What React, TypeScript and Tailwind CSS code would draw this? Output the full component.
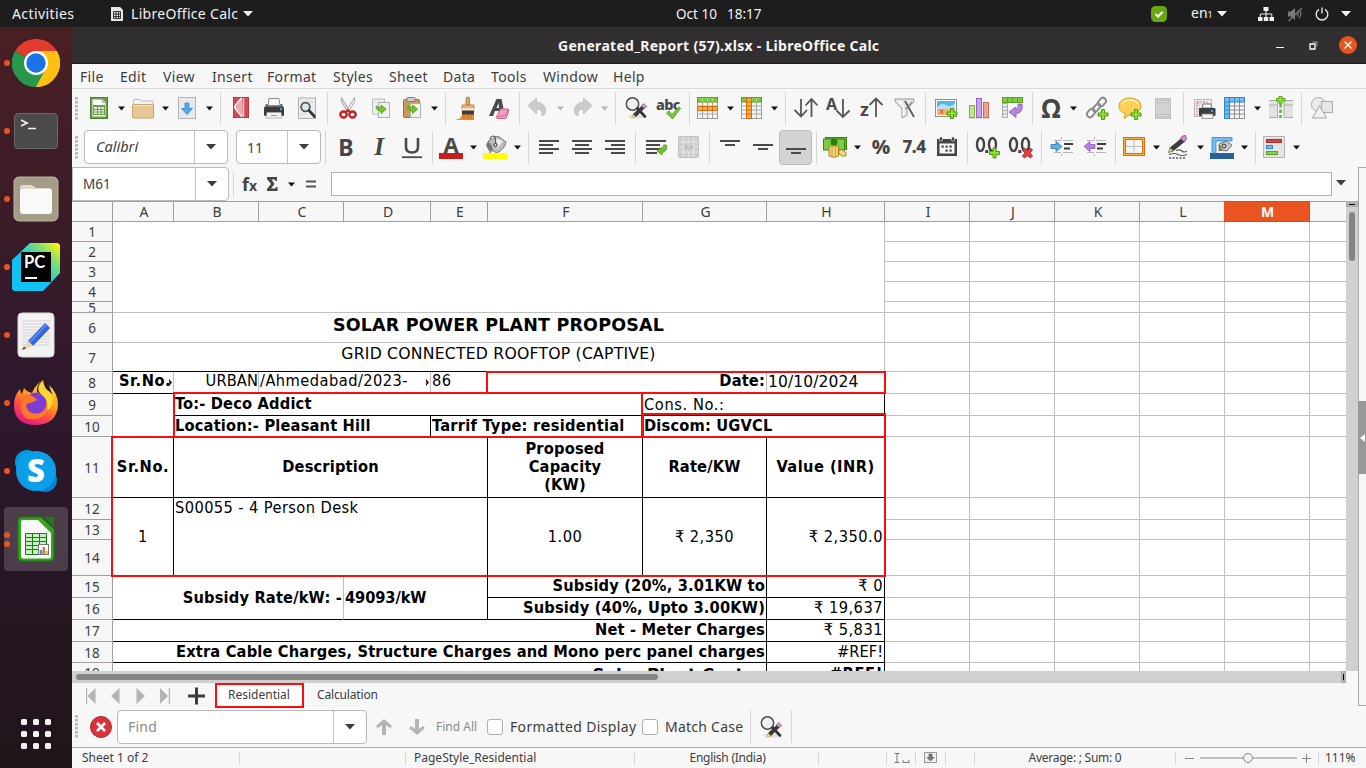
import React from "react";

type P = { children?: React.ReactNode; className?: string };

const Svg = ({ children, w = 24, h = 24, className = "" }: P & { w?: number; h?: number }) => (
  <svg width={w} height={h} viewBox={`0 0 ${w} ${h}`} fill="none" className={`shrink-0 ${className}`}>
    {children}
  </svg>
);

const Caret = ({ fill = "#111" }: { fill?: string }) => (
  <svg width="7" height="5" viewBox="0 0 7 5" className="shrink-0">
    <path d="M0 .5h7L3.5 4.5z" fill={fill} />
  </svg>
);
const BigCaret = ({ fill = "#3d3d3d" }: { fill?: string }) => (
  <svg width="10" height="6" viewBox="0 0 10 6" className="shrink-0">
    <path d="M0 0h10L5 5.5z" fill={fill} />
  </svg>
);

/* ---------- toolbar pieces ---------- */
const Btn = ({ children }: P) => <div className="flex w-[33px] shrink-0 justify-center pl-px">{children}</div>;
const Split = ({ children, off = false }: P & { off?: boolean }) => (
  <div className="flex w-11 shrink-0 items-center gap-[7px] pl-[3px]">
    {children}
    <Caret fill={off ? "#b5b5b5" : "#111"} />
  </div>
);
const Sep = () => <div className="mr-[3px] ml-1 h-[33px] w-px shrink-0 bg-[#d6d6d6]" />;
const Grip = () => (
  <svg width="3" height="23" viewBox="0 0 3 23" className="shrink-0">
    {[0, 4, 8, 12, 16, 20].map((y) => (
      <rect key={y} y={y} width="3" height="2.6" fill="#b9b9b9" />
    ))}
  </svg>
);

/* ---------- shared fragments ---------- */
const Plus = ({ x, y }: { x: number; y: number }) => (
  <path
    d={`M${x + 3.5} ${y + 0.5}h3v3.5h3.5v3h-3.5v3.5h-3v-3.5H${x}v-3h3.5z`}
    fill="#8ae234"
    stroke="#4e9a06"
    strokeWidth="1"
  />
);
const GreenArrow = ({ x, y }: { x: number; y: number }) => (
  <path
    d={`M${x} ${y}q0 5 5 5v2.5l5-4.3l-5-4.2v2.5q-3 0-5-1.5z`}
    fill="#73c234"
    stroke="#4e9a06"
    strokeWidth=".8"
  />
);

const NewDoc = () => (
  <Svg>
    <rect x="3.5" y="1.5" width="17" height="21" fill="#6b9e48" stroke="#4f7f30" />
    <path d="M5.500 3.500h10l3 3v14h-13z" fill="#fff" />
    <path d="M15.500 3.500v3h3" fill="#cde3bb" stroke="#6b9e48" strokeWidth=".6" />
    <rect x="6.500" y="9.500" width="11" height="9" fill="#e7f2df" stroke="#6b9e48" />
    <path d="M6.500 10.500h11M6.500 13.500h11M6.500 16h11M10.500 9.500v9M14 9.500v9" stroke="#6b9e48" />
  </Svg>
);
const OpenDoc = () => (
  <Svg>
    <path d="M2.500 10V5l1-1.500h6L10.500 5h11l.5 1.500V10z" fill="#f3f3f3" stroke="#bcbcbc" />
    <rect x="1.500" y="8.500" width="21" height="13.500" rx="1" fill="#e6c795" stroke="#c9a46c" />
    <path d="M2.500 9.500h19" stroke="#f6e5c7" />
  </Svg>
);
const SaveDoc = () => (
  <Svg>
    <rect x="3.500" y="1.500" width="17" height="21" fill="#e9e9e9" stroke="#b4b4b4" />
    <path d="M10 7h4v5.500h3.500L12 18.500L6.500 12.500H10z" fill="#55a9e0" stroke="#2f86c4" strokeWidth=".8" />
  </Svg>
);
const Pdf = () => (
  <Svg>
    <rect x="4.500" y="1.500" width="15" height="20" fill="#cf4a52" stroke="#b53a42" />
    <path d="M13 2L6.500 9q-1.500 2 0 4L14 20.500z" fill="#eba9ab" />
    <path d="M12.500 2L6.500 9q-1.500 2 0 4L13 21" stroke="#fff" strokeWidth="1.300" />
    <path d="M14.500 2v19" stroke="#f3c3c3" strokeWidth="1.500" />
  </Svg>
);
const Printer = () => (
  <Svg>
    <path d="M4 8h16l2 4H2z" fill="#6b6b6b" />
    <rect x="2" y="11" width="20" height="9" rx="1.500" fill="#3b3b3b" />
    <path d="M6 9.500l1-7h10l1 7z" fill="#fafafa" stroke="#8a8a8a" />
    <rect x="18" y="12" width="2" height="2" fill="#29b6f6" />
    <path d="M5 16.500h14l1 5.500H4z" fill="#f4f4f4" stroke="#aaa" strokeWidth=".8" />
    <path d="M9 19.500h6" stroke="#999" />
  </Svg>
);
const Preview = () => (
  <Svg>
    <rect x="3.500" y="2" width="17" height="20.500" fill="#ececec" stroke="#b0b0b0" />
    <path d="M5.500 6h13M5.500 18h6" stroke="#d5d5d5" />
    <circle cx="10.500" cy="11" r="4.300" fill="#dfe5ea" stroke="#555" strokeWidth="1.800" />
    <path d="M14 14.500l5.500 6" stroke="#333" strokeWidth="2.600" strokeLinecap="round" />
  </Svg>
);
const Cut = () => (
  <Svg>
    <path d="M5.500 1.500q-1 4 2 8l4 6 1.600-2z" fill="#d9d9d9" stroke="#8b8b8b" strokeWidth=".7" />
    <path d="M18.500 1.500q1 4-2 8l-4 6-1.600-2z" fill="#efefef" stroke="#8b8b8b" strokeWidth=".7" />
    <ellipse cx="7.500" cy="18.500" rx="3.200" ry="3" stroke="#c41f1f" strokeWidth="2.300" />
    <ellipse cx="16.500" cy="18.500" rx="3.200" ry="3" stroke="#c41f1f" strokeWidth="2.300" />
    <path d="M10 16l2-2 2 2" stroke="#c41f1f" strokeWidth="1.800" />
  </Svg>
);
const Copy = () => (
  <Svg>
    <rect x="3.500" y="3" width="12" height="15" fill="#ededed" stroke="#bdbdbd" />
    <rect x="9.500" y="6.500" width="11" height="15" fill="#f1f1f1" stroke="#b2b2b2" />
    <GreenArrow x={7} y={10} />
  </Svg>
);
const Paste = () => (
  <Svg>
    <rect x="3.500" y="3.500" width="16" height="18" rx="1" fill="#c79a5b" stroke="#9c7136" />
    <rect x="7" y="1.500" width="8" height="4" rx="1" fill="#cfcfcf" stroke="#7d7d7d" />
    <rect x="10.500" y="7.500" width="10" height="14" fill="#f3f3f3" stroke="#b2b2b2" />
    <GreenArrow x={7.5} y={10} />
  </Svg>
);
const Brush = () => (
  <Svg className="translate-x-px">
    <path d="M11 9V3q0-2 1.800-2t1.800 2v6z" fill="#dfa85c" stroke="#a8722c" strokeWidth=".8" />
    <path d="M7 9h12v5H7z" fill="#e9b870" stroke="#b07a34" strokeWidth=".8" />
    <path d="M7 12.500h12v2.200H7z" fill="#f4f4f4" />
    <path d="M7 14.500h12v4.500H7z" fill="#3e3e3e" />
    <path d="M7 18.500h12V24H0l5-1.500z" fill="#ee8a2a" />
    <path d="M9 19v4M13 19v4M16 19v4" stroke="#b86412" strokeWidth=".8" />
  </Svg>
);
const ClearFmt = () => (
  <Svg>
    <path d="M2 20L9.500 3h5l2.500 12-3 3h-2l-.4-3H8l-2 5zM9.500 12h2.600L11.500 7z" fill="#4a4a4a" />
    <path d="M13.500 13h7.500l1 1-2.500 7.500-1.500 1H10l-.5-1.500z" fill="#f79ac0" stroke="#d0628f" />
    <path d="M9.800 20h8.700l2.500-7" stroke="#d0628f" strokeWidth=".8" />
  </Svg>
);
const Undo = ({ flip = false }: { flip?: boolean }) => (
  <Svg className={flip ? "-scale-x-100" : ""}>
    <path d="M2 9.500L10.500 2v4.500q9 0 9 8.500 0 4-3.500 5 1.500-7-5.500-7v5z" fill="#cbcbcb" stroke="#bdbdbd" strokeWidth=".8" />
  </Svg>
);
const FindRep = () => (
  <Svg>
    <ellipse cx="13" cy="20.500" rx="9" ry="2" fill="#e0e0e0" />
    <circle cx="8.500" cy="8" r="6.200" fill="#eef0f1" stroke="#4d4d4d" strokeWidth="1.500" />
    <path d="M13.500 12.500l7.500 8" stroke="#333" strokeWidth="2.600" strokeLinecap="round" />
    <path d="M7.500 22.500l1.500-4.500L17.500 10l3 2.500L12 21z" fill="#3a3a3a" />
    <path d="M7.500 22.500l1.500-4.500 3 3z" fill="#f0d874" />
    <path d="M17.500 9.500l2-2 3.500 3-2 2z" fill="#d68fc0" stroke="#8e5a80" strokeWidth=".6" />
  </Svg>
);
const Abc = () => (
  <div className="relative h-6 w-6">
    <span className="absolute -left-px top-[-2px] font-[Noto_Sans] text-[14.500px] leading-5 font-extrabold tracking-[-0.7px] text-[#474747]">
      abc
    </span>
    <Svg className="absolute top-0 left-0">
      <path d="M9.500 17l2.500-2 3 3.500L22 11l1.500 1.500L15.500 23z" fill="#7ac943" stroke="#4e9a06" strokeWidth=".8" />
    </Svg>
  </div>
);
const Table = ({ v = false }: { v?: boolean }) => (
  <Svg>
    <rect x="1.500" y="1.500" width="20" height="21" fill="#f6f6f6" stroke="#9a9a9a" />
    <path d="M1.500 10h20M1.500 14h20M1.500 18h20M6.500 6v16M11.500 6v16M16.500 6v16" stroke="#a9a9a9" />
    <rect x="1.500" y="1.500" width="20" height="4.500" fill="#7ecb3f" stroke="#5ba321" />
    <path d="M6.500 2v4M11.500 2v4M16.500 2v4" stroke="#a6de7a" />
    {v ? (
      <path d="M6.500 2h5v20.500h-5zM6.500 6h5M6.500 10h5M6.500 14h5M6.500 18h5" fill="#fbb03b" stroke="#d56a10" />
    ) : (
      <path d="M1.500 10.500h20v4h-20zM6.500 10.500v4M11.500 10.500v4M16.500 10.500v4" fill="#fbb03b" stroke="#d56a10" />
    )}
  </Svg>
);
const Sort = () => (
  <Svg>
    <path d="M7 3v17M0.500 14L7 20.500 13 14M17.500 21V3M11.500 9.500l6-6.500 6 6.500" stroke="#565656" strokeWidth="1.800" />
  </Svg>
);
const SortAz = () => (
  <div className="relative h-6 w-6">
    <span className="absolute -left-px top-px font-[Noto_Sans] text-[16px] leading-[15px] font-bold text-[#4a4a4a]">A</span>
    <Svg className="absolute top-0 left-0">
      <path d="M16 3v17.500M9.500 14.500L16 21l6.500-6.500" stroke="#565656" strokeWidth="1.800" />
    </Svg>
  </div>
);
const SortZa = () => (
  <div className="relative h-6 w-6">
    <span className="absolute left-0 top-[5px] font-[Noto_Sans] text-[18px] leading-[17px] font-bold text-[#4a4a4a]">z</span>
    <Svg className="absolute top-0 left-0">
      <path d="M16 21V3M9.500 9L16 2.500 22.500 9" stroke="#565656" strokeWidth="1.800" />
    </Svg>
  </div>
);
const Filter = () => (
  <Svg>
    <path d="M2 3h19l-.5 3-6.500 7v6l-5 3v-9L2.500 6z" fill="#e9e9e9" stroke="#999" />
    <path d="M10.500 13V20M6 5l5 6" stroke="#fff" strokeWidth="1.500" />
    <path d="M12 5l9 16" stroke="#5a5a5a" strokeWidth="1.800" />
    <path d="M19 6L12.500 13" stroke="#8b8b8b" strokeWidth="1.200" />
  </Svg>
);
const Image = () => (
  <Svg>
    <rect x="1.500" y="3.500" width="21" height="17" fill="#fff" stroke="#8f8f8f" />
    <rect x="3" y="5" width="18" height="14" fill="#55b6ee" />
    <path d="M3 12q4-6 9-3t9-2v6H3z" fill="#b8e2f8" />
    <rect x="3" y="13" width="18" height="6" fill="#fbb45c" />
    <path d="M6 13.500l3 4M9 13.500l-3 4" stroke="#d33" />
    <Plus x={13} y={12} />
  </Svg>
);
const Chart = () => (
  <Svg>
    <path d="M1 22.500h22" stroke="#ddd" />
    <rect x="2.500" y="9.500" width="5" height="12" fill="#bde58c" stroke="#7cb342" />
    <rect x="9.500" y="2.500" width="5" height="19" fill="#c9a2ee" stroke="#9a62d0" />
    <rect x="16.500" y="6.500" width="5" height="15" fill="#f2a090" stroke="#d06a58" />
  </Svg>
);
const Pivot = () => (
  <Svg>
    <path d="M2.500 7.500h5v14h-5zM2.500 11h5M2.500 14.500h5M2.500 18h5" fill="#eee" stroke="#aaa" />
    <rect x="2.500" y="1.500" width="20" height="5" fill="#7ecb3f" stroke="#5ba321" />
    <path d="M7.500 2v4M12.500 2v4M17.500 2v4" stroke="#5ba321" />
    <path d="M18 8h4q1.500 9-6 9.500v4l-7-5.500 7-5v3q3-1 2-6z" fill="#b487e0" stroke="#8b58c0" strokeWidth=".8" />
  </Svg>
);
const Glyph = ({ children, className = "" }: P) => (
  <span className={`flex h-6 w-6 shrink-0 items-center justify-center leading-6 text-[#454545] ${className}`}>{children}</span>
);
const Link = () => (
  <Svg>
    <g stroke="#8b8b8b" strokeWidth="2">
      <rect x="-3" y="-4.500" width="6" height="9" rx="3" transform="translate(17 6) rotate(40)" />
      <rect x="-2" y="-4.500" width="4.500" height="9" rx="2.200" transform="translate(11.500 11.500) rotate(40)" />
      <rect x="-3" y="-4.500" width="6" height="9" rx="3" transform="translate(6 17) rotate(40)" />
    </g>
    <Plus x={13} y={13} />
  </Svg>
);
const Comment = () => (
  <Svg>
    <path d="M12 2c6.500 0 11 3.500 11 8s-4.500 8-10 8l-7 4.500 1.500-5C3.500 16.500 1 13.500 1 10c0-4.500 4.500-8 11-8z" fill="#fccf57" stroke="#dd9d1d" />
    <path d="M4 8q3-4 8-4t8 4" stroke="#fff0b8" strokeWidth="1.500" />
    <Plus x={13} y={13} />
  </Svg>
);
const HeadFoot = () => (
  <Svg>
    <rect x="4.500" y="2.500" width="15" height="20" fill="#d2d2d2" stroke="#bfbfbf" />
    <path d="M6.500 4.500h11v2h-11zM6.500 18.500h11v2h-11z" fill="#e2e2e2" stroke="#b5b5b5" strokeWidth=".8" />
  </Svg>
);
const PrintArea = () => (
  <Svg>
    <rect x="2.500" y="3.500" width="17" height="17" fill="#f1f1f1" stroke="#b9b9b9" />
    <path d="M2.500 8h17M2.500 13h17M7 4v16M12 4v16" stroke="#d0d0d0" />
    <path d="M5 6h12M5 6v14" stroke="#e05555" strokeDasharray="1.500 1.500" />
    <path d="M10 12l1-4h8l1 4z" fill="#fff" stroke="#777" />
    <rect x="7" y="12" width="16.500" height="8" rx="1" fill="#3d3d3d" />
    <rect x="19" y="14" width="2" height="2" fill="#29b6f6" />
    <rect x="10" y="18" width="11" height="4.500" fill="#f5f5f5" stroke="#888" strokeWidth=".8" />
  </Svg>
);
const Freeze = () => (
  <Svg>
    <rect x="1.500" y="1.500" width="20" height="21" fill="#f6f6f6" stroke="#999" />
    <path d="M6 10h16M6 14h16M6 18h16M11.500 6v16M16.500 6v16" stroke="#8d8d8d" />
    <path d="M1.500 1.500h20v4.500H6.500v16.500h-5z" fill="#74bdf0" stroke="#2f86c4" />
    <path d="M6.500 2v4M11.500 2v4M16.500 2v4M2 6h4M2 10h4M2 14h4M2 18h4" stroke="#2f86c4" />
  </Svg>
);
const SplitWin = () => (
  <Svg w={26}>
    <path d="M1 4.500h8.500v17H1zM16 4.500h9v17h-9z" fill="#e2e2e2" />
    <path d="M1 4.500h8.500v17H1M1 9h8.500M25 4.500h-9v17h9M25 9h-9" stroke="#ababab" />
    <path d="M12.500 8v14" stroke="#5cb52a" strokeWidth="2.500" strokeDasharray="3.500 2" />
    <path d="M11 0h3v2.500h3v2.500h-3v2.500h-3V5H8.500V2.500H11z" fill="#8ae234" stroke="#4e9a06" strokeWidth=".8" />
  </Svg>
);
const Shapes = () => (
  <Svg>
    <circle cx="8.500" cy="8.500" r="7" fill="#ececec" stroke="#adadad" />
    <rect x="11.500" y="5.500" width="11" height="11" fill="#e6e6e6" stroke="#adadad" />
    <path d="M9.500 9.500l7 12.500h-14z" fill="#f1f1f1" stroke="#a3a3a3" />
  </Svg>
);

const FontColor = () => (
  <div className="flex h-6 w-6 flex-col items-center justify-end">
    <span className="font-[Noto_Sans] text-[22px] leading-[18px] font-bold text-[#4a4a4a]">A</span>
    <span className="w-6 shrink-0 border-t-[6px] border-[#c91d1d]" />
  </div>
);
const Highlight = () => (
  <Svg className="overflow-visible">
    <path d="M5 6L15 1l8 6q-1 7-9 11L8 15z" fill="#bdbdbd" stroke="#666" strokeWidth=".8" />
    <path d="M12 3l8 3-6 8z" fill="#ececec" />
    <ellipse cx="6.500" cy="12" rx="2.500" ry="5" transform="rotate(-25 6.500 12)" fill="#777" />
    <path d="M7 4q1-4 5-2.500l1 8" stroke="#555" strokeWidth="1.100" />
    <circle cx="12.500" cy="10" r="1.600" stroke="#333" fill="#ddd" />
    <path d="M6 15l3 4H6z" fill="#e67e22" />
    <rect x="0" y="18" width="24" height="6" fill="#ff0" />
  </Svg>
);
const HAlign = ({ m }: { m: number }) => (
  <Svg>
    {[20, 14, 20, 14].map((w, i) => (
      <rect key={i} x={2 + ((20 - w) * m) / 2} y={5 + i * 4} width={w} height="2" fill="#4a4a4a" />
    ))}
  </Svg>
);
const VAlign = ({ y }: { y: number }) => (
  <Svg>
    <rect x="2" y={y} width="20" height="2" fill="#4a4a4a" />
    <rect x={7} y={y + 4} width="10" height="2" fill="#4a4a4a" />
  </Svg>
);
const Wrap = () => (
  <Svg>
    <path d="M2 6h20M2 10h14M2 14h16M2 18h11" stroke="#4a4a4a" strokeWidth="1.900" />
    <path d="M19.500 10h3q1 7-4.500 7.500v2.500l-5-4 5-4v2.500q2-.5 1.500-4.500z" fill="#73c234" stroke="#4e9a06" strokeWidth=".8" />
  </Svg>
);
const Merge = () => (
  <Svg>
    <rect x="1.500" y="1.500" width="20" height="21" rx="1" fill="#cfcfcf" stroke="#c0c0c0" />
    <path d="M1.500 7h20M1.500 17h20M6.500 2v20M11.500 2v5M11.500 17v5M16.500 2v20M2 12h4M17 12h4" stroke="#e6e6e6" />
    <path d="M10 9.500v5L7.500 12zM13.500 9.500v5L16 12z" fill="#b5b5b5" />
  </Svg>
);
const Money = () => (
  <Svg className="overflow-visible">
    <rect x="2.500" y="2.500" width="21" height="12" fill="#5cb52a" stroke="#3d8a12" />
    <rect x=".5" y="4" width="21" height="11" fill="#7ccb42" stroke="#3d8a12" />
    <circle cx="11" cy="7" r="3.500" fill="#2f7d12" />
    <path d="M6 11h9.500v10q-4.700 2.500-9.500 0z" fill="#f0d070" stroke="#a9862a" />
    <path d="M9 12v9M12.500 12v9" stroke="#c7a544" />
    <ellipse cx="19.500" cy="18" rx="4" ry="2.600" transform="rotate(35 19.500 18)" fill="#f5dc84" stroke="#a9862a" />
  </Svg>
);
const DateIc = () => (
  <Svg>
    <path d="M2 4h20v17H2zM4.500 8.500v10h15v-10z" fill="#454545" fillRule="evenodd" />
    <rect x="4.500" y="2" width="3" height="4" rx="1" fill="#454545" stroke="#f7f7f7" strokeWidth=".6" />
    <rect x="16.500" y="2" width="3" height="4" rx="1" fill="#454545" stroke="#f7f7f7" strokeWidth=".6" />
    {[7, 11, 15].map((x) => (
      <g key={x} fill="#454545">
        <rect x={x - 0.5} y="10.500" width="2.200" height="2.200" />
        {x > 7 && <rect x={x - 0.5} y="14.500" width="2.200" height="2.200" />}
      </g>
    ))}
  </Svg>
);
const Decimals = ({ del = false }: { del?: boolean }) => (
  <Svg className="overflow-visible">
    <ellipse cx="4.500" cy="9.500" rx="3.500" ry="6.500" stroke="#444" strokeWidth="2.400" />
    <ellipse cx="16.500" cy="9.500" rx="3.500" ry="6.500" stroke="#444" strokeWidth="2.400" />
    <rect x="9.300" y="15" width="3" height="3" fill="#444" />
    {del ? (
      <path d="M15.500 13l3 2.500 3-2.500 2 2-2.500 3 2.500 3-2 2-3-2.500-3 2.500-2-2 2.500-3-2.500-3z" fill="#e04040" stroke="#a81c1c" strokeWidth=".8" />
    ) : (
      <Plus x={13.5} y={12.5} />
    )}
  </Svg>
);
const Indent = ({ back = false }: { back?: boolean }) => (
  <Svg>
    <path d="M13 5.500h10M13 17.500h10M4 5.500h7M4 17.500h7M11.500 2v2.500M11.500 19v2" stroke="#b5b5b5" />
    <path d="M14 9h9M14 13.500h6" stroke="#3d3d3d" strokeWidth="2" />
    <path
      d={back ? "M12 9.500H7V6.500L1 11.500l6 5v-3h5z" : "M1 9.500h5V6.500l6 5-6 5v-3H1z"}
      fill={back ? "#b583e0" : "#58aee6"}
      stroke={back ? "#8b58c0" : "#2879b4"}
      strokeWidth=".8"
    />
  </Svg>
);
const Borders = () => (
  <Svg>
    <rect x="2.500" y="3.500" width="19" height="16" fill="#f6f6f6" stroke="#d5700f" strokeWidth="3" />
    <rect x="2.500" y="3.500" width="19" height="16" stroke="#fbb040" />
    <path d="M12 5v13M4 11.500h16" stroke="#bdbdbd" />
  </Svg>
);
const LineStyle = () => (
  <Svg className="overflow-visible">
    <path d="M4 12.500L15 3.500l3.500 3.500L7.500 16 2.500 17.500z" fill="#3d3d3d" />
    <path d="M2.500 17.500l1.500-5 3.500 3.500z" fill="#e6d26a" stroke="#555" strokeWidth=".5" />
    <path d="M14.500 3.500l2-2.500 3-.5 1 3-2 3.500z" fill="#d68fc0" stroke="#8e3f80" strokeWidth=".8" />
    <path d="M10 15.500q4-1.500 6 .5t5 0M3 19.500q5-2 9 0t9 0" stroke="#5a5a5a" strokeWidth="1.100" />
    <path d="M3 23h17" stroke="#555" strokeDasharray="2 1.500" strokeWidth="1.300" />
  </Svg>
);
const BorderColor = () => (
  <Svg className="overflow-visible">
    <path d="M2 20V2.500h20V6H6V20z" fill="#74bdf0" stroke="#2f86c4" strokeWidth=".8" />
    <path d="M9 9l7-3 6 4-5 6-6-1z" fill="#c9c9c9" stroke="#555" strokeWidth=".8" />
    <circle cx="14" cy="11" r="2" stroke="#333" />
    <path d="M9 10l3 5-3 1z" fill="#e67e22" stroke="#444" strokeWidth=".6" />
    <rect x="0" y="18" width="24" height="6" fill="#2a6099" />
  </Svg>
);
const Cond = () => (
  <Svg>
    <rect x="1.500" y="1.500" width="21" height="21" fill="#e4e4e4" stroke="#b5b5b5" />
    <rect x="4.500" y="4.500" width="15" height="3" fill="#d64545" stroke="#b22f2f" />
    <rect x="4.500" y="10.500" width="6" height="3" fill="#74bdf0" stroke="#2f86c4" />
    <rect x="4.500" y="16.500" width="11" height="3" fill="#8ad14c" stroke="#5ba321" />
  </Svg>
);

/* ---------- dock ---------- */
const Dot = () => <span className="h-[6px] w-[6px] shrink-0 rounded-full bg-[#e95420]" />;
const DockItem = ({ children, on = false }: P & { on?: boolean }) => (
  <div className="flex h-[68px] w-[72px] items-center">
    <div className="z-10 flex w-1 shrink-0 flex-col gap-[3px] pl-1">
      <Dot />
      {on && <Dot />}
    </div>
    <div className={`flex h-16 w-16 items-center justify-center rounded ${on ? "bg-white/17" : ""}`}>{children}</div>
  </div>
);

const Dock = () => (
  <nav className="flex w-[72px] shrink-0 flex-col bg-linear-to-b from-[#491f22] via-[#2e182d] via-50% to-[#20151b] pt-[2px]">
    <DockItem>
      <Svg w={48} h={48}>
        <path d="M24 24L3.200 12A24 24 0 0 1 44.800 12z" fill="#e33b2e" />
        <path d="M24 24L44.800 12A24 24 0 0 1 24 48z" fill="#fcc012" />
        <path d="M24 24V48A24 24 0 0 1 3.200 12z" fill="#27984b" />
        <path d="M3.200 12L14 30l10 5 10-5-10 18A24 24 0 0 1 3.200 12z" fill="#27984b" />
        <path d="M34 30L24 48h1A24 24 0 0 0 44.800 12H24z" fill="#fcc012" />
        <circle cx="24" cy="24" r="12" fill="#fff" />
        <circle cx="24" cy="24" r="9.700" fill="#1a73e8" />
      </Svg>
    </DockItem>
    <DockItem>
      <div className="h-9 w-11 rounded border border-[#6a6a6a] bg-[#4a4a4a]">
        <Svg w={42} h={34}>
          <path d="M6 6l6 3-6 3M13 14.500h8" stroke="#f2f2f2" strokeWidth="1.700" />
        </Svg>
      </div>
    </DockItem>
    <DockItem>
      <Svg w={46} h={46}>
        <rect x="1" y="1" width="44" height="44" rx="5" fill="#a39c86" stroke="#bbb59f" />
        <path d="M7 12q0-3 3-3h9l4 3h13q3 0 3 3v7H7z" fill="#dedacd" />
        <rect x="7" y="13" width="32" height="25" rx="3" fill="#f9f9f7" />
      </Svg>
    </DockItem>
    <DockItem>
      <Svg w={48} h={48}>
        <defs>
          <linearGradient id="pc" x1="0" y1="1" x2="1" y2="0">
            <stop offset=".45" stopColor="#10c3f2" />
            <stop offset=".75" stopColor="#7fe070" />
            <stop offset=".95" stopColor="#fcf010" />
          </linearGradient>
        </defs>
        <path d="M18 0h28l2 2v28L31 48H2l-2-2V17z" fill="url(#pc)" />
        <rect x="9" y="9" width="30" height="30" fill="#000" />
        <rect x="13" y="34" width="12" height="2" fill="#fff" />
        <text x="12" y="24.500" fontFamily="Lato, sans-serif" fontWeight="700" fontSize="16.500" fill="#fff">
          PC
        </text>
      </Svg>
    </DockItem>
    <DockItem>
      <Svg w={38} h={46}>
        <rect x="1" y="1" width="36" height="44" rx="4" fill="#f2f2f2" stroke="#d8d8d8" />
        <path d="M5 9h28M5 12h28M5 15h28M5 18h28M5 21h28M5 24h28M5 27h28M5 30h28M5 33h28" stroke="#d4d4d4" />
        <path d="M11 29L28 11l5 5-17 18z" fill="#3465d9" />
        <path d="M12.500 30.500L29.500 12.500" stroke="#5c88ee" strokeWidth="2" />
        <path d="M5 38l6-9 5 5z" fill="#f3d3a8" />
        <path d="M5 38l2-3.500 2 2z" fill="#444" />
      </Svg>
    </DockItem>
    <DockItem>
      <Svg w={46} h={48}>
        <defs>
          <linearGradient id="ff" x1="0.800" y1="0" x2=".3" y2="1">
            <stop offset="0" stopColor="#ffe83d" />
            <stop offset=".45" stopColor="#ff9a20" />
            <stop offset=".7" stopColor="#ff4b46" />
            <stop offset="1" stopColor="#e31587" />
          </linearGradient>
        </defs>
        <path
          d="M30 1q-7 5-6 12l6 3 9-1-3-9q9 8 9 20-1 19-22 20Q1 46 1 26q0-9 6-16 0 3 2 5l2-6q3 4 8 5 3-8 11-13z"
          fill="url(#ff)"
        />
        <circle cx="23" cy="24" r="10.500" fill="#7a3fd0" />
        <path d="M7 17q7-4 14 1l3 3q-3 2-7 3-4 0-4 4 2 7 10 7 9 0 12-8-1 12-13 13Q10 42 8 30q-1-7 3-11z" fill="#ff7a28" />
        <path d="M30 1q-9 9-1 15t5 16q10-9 3-19-6-3-7-12z" fill="#ffd72e" />
      </Svg>
    </DockItem>
    <DockItem>
      <Svg w={44} h={44}>
        <circle cx="13" cy="13" r="12" fill="#0098e0" />
        <circle cx="31" cy="31" r="12" fill="#0a80cf" />
        <circle cx="22" cy="22" r="20" fill="#0a9fe8" />
        <text x="13" y="33" fontFamily="'Open Sans', sans-serif" fontWeight="800" fontSize="31" fill="#fff">
          S
        </text>
      </Svg>
    </DockItem>
    <DockItem on>
      <Svg w={38} h={46}>
        <path d="M5 1h19l13 12v28q0 4-4 4H5q-4 0-4-4V5q0-4 4-4z" fill="#35a41f" stroke="#1b7a10" />
        <path d="M6 4h15l13 13v24q0 1.500-2 1.500H6q-2 0-2-2V6q0-2 2-2z" fill="#f8f8f8" />
        <path d="M27 1h10v10z" fill="#1b7f12" />
        <path d="M8.500 17.500h21v21h-21zM8.500 21.500h21M8.500 25.500h21M8.500 29.500h21M8.500 33.500h21M15.500 17.500v21M22.500 17.500v21" fill="#c9f0c0" stroke="#15800d" />
        <rect x="21.500" y="28.500" width="10" height="10" fill="#fff" stroke="#777" />
        <path d="M24 34v4" stroke="#2b9de0" strokeWidth="2.500" />
        <path d="M26.800 31v7" stroke="#e8762c" strokeWidth="2.500" />
        <path d="M29.700 35v3" stroke="#f2c12e" strokeWidth="2.500" />
      </Svg>
    </DockItem>
    <div className="mt-auto mb-[19px] grid grid-cols-3 gap-[6px] self-center">
      {Array.from({ length: 9 }, (_, i) => (
        <span key={i} className="h-[6px] w-[6px] rounded-[1.500px] bg-[#f5f3f2]" />
      ))}
    </div>
  </nav>
);

/* ---------- sheet ---------- */
const COLS = "ABCDEFGHIJKLM".split("");
const ROWS = Array.from({ length: 19 }, (_, i) => i + 1);

const Cell = ({ children, className = "" }: P) => (
  <div
    className={`flex min-w-0 overflow-hidden whitespace-nowrap ${
      className.includes("font-bold") ? "tracking-[0.17px]" : "tracking-[0.48px]"
    } ${className}`}
  >
    <span>{children}</span>
  </div>
);
const Overflow = () => (
  <svg width="3" height="7" viewBox="0 0 3 7" className="mt-[7px] shrink-0">
    <path d="M0 0l3 3.500L0 7z" fill="#000" />
    <path d="M0 2.500h1v2H0z" fill="#f33" />
  </svg>
);

const Sheet = () => (
  <div className="grid h-[470px] w-[1274px] shrink-0 grid-cols-[41px_61px_85px_85px_87px_57px_155px_124px_118px_85px_85px_85px_85px_85px_36px] grid-rows-[21px_20px_20px_20px_20px_11px_30px_29px_22px_22px_21px_61px_22px_20px_36px_22px_22px_22px_21px_8px] overflow-hidden bg-white font-['DejaVu_Sans_Condensed','DejaVu_Sans',sans-serif] text-[16.300px] leading-[18px] text-black">
    <div className="border-y border-r border-[#a0a0a0] bg-[#f7f7f7]" />
    {COLS.map((c) => (
      <div
        key={c}
        className={`flex items-center justify-center border-y border-r pl-[2px] font-[Noto_Sans] text-[14px] leading-4 ${
          c === "M"
            ? "-ml-px border-[#d84a18] bg-[#e95420] font-bold text-white"
            : "border-[#a0a0a0] bg-[#f7f7f7] text-[#3d3d3d]"
        }`}
      >
        {c}
      </div>
    ))}
    <div className="border-y border-[#a0a0a0] bg-[#f7f7f7]" />
    {ROWS.map((r) => (
      <div
        key={r}
        className={`col-start-1 flex justify-center overflow-hidden border-r border-[#a0a0a0] bg-[#f7f7f7] pt-px font-[Noto_Sans] text-[13.500px] leading-4 text-[#3d3d3d] ${
          r < 19 ? "items-center border-b" : "items-start"
        }`}
      >
        <span className={r === 19 ? "mt-px" : ""}>{r}</span>
      </div>
    ))}

    {/* free columns to the right of the report */}
    <div className="col-[10/16] row-[2/21] grid grid-cols-[85px_85px_85px_85px_85px_36px] grid-rows-[20px_20px_20px_20px_11px_30px_29px_22px_22px_21px_61px_22px_20px_36px_22px_22px_22px_21px_8px]">
      {ROWS.map((r) =>
        [0, 1, 2, 3, 4, 5].map((c) => (
          <div key={`${r}-${c}`} className={`${c < 5 ? "border-r" : ""} ${r < 19 ? "border-b" : ""} border-[#c0c0c0]`} />
        ))
      )}
    </div>

    <div className="col-[2/10] row-[2/7] border-r border-b border-[#c0c0c0]" />
    <Cell className="col-[2/10] row-[7/8] justify-center border-r border-b border-[#c0c0c0] pt-[3px] font-bold">
      <span className="font-['DejaVu_Sans',sans-serif] text-[17.500px]">SOLAR POWER PLANT PROPOSAL</span>
    </Cell>
    <Cell className="col-[2/10] row-[8/9] justify-center border-r border-b border-r-[#c0c0c0] border-b-black pt-[2px]">
      <span className="font-['DejaVu_Sans',sans-serif] text-[15.700px] tracking-[0.2px]">GRID CONNECTED ROOFTOP (CAPTIVE)</span>
    </Cell>

    <div className="col-[2/3] row-[9/10] flex overflow-hidden border-r border-b border-r-[#c0c0c0] border-b-black pl-[6px] font-bold">
      <span className="w-[50px] shrink-0 overflow-hidden tracking-[0.55px]">Sr.No.</span>
      <Overflow />
    </div>
    <Cell className="col-[3/4] row-[9/10] justify-end border-r border-b border-r-[#c0c0c0] border-b-black">
      <span className="tracking-[0.1px]">URBAN</span>
    </Cell>
    <div className="col-[4/6] row-[9/10] flex justify-between border-r border-b border-r-[#c0c0c0] border-b-black pr-px pl-px">
      <span className="tracking-[0.45px]">/Ahmedabad/2023-</span>
      <Overflow />
    </div>
    <Cell className="col-[6/7] row-[9/10] border-b border-black pl-px">86</Cell>
    <Cell className="col-[7/9] row-[9/10] justify-end border-r border-b border-r-[#c0c0c0] border-b-black pr-px font-bold">
      Date:
    </Cell>
    <Cell className="col-[9/10] row-[9/10] border-r border-b border-black pt-px pl-px">
      <span className="font-['DejaVu_Sans',sans-serif] text-[15.500px] tracking-[0.1px]">10/10/2024</span>
    </Cell>

    <div className="col-[2/3] row-[10/12] border-b border-black" />
    <Cell className="col-[3/8] row-[10/11] border-b border-black pt-px pl-px font-bold">To:- Deco Addict</Cell>
    <Cell className="col-[8/10] row-[10/11] border-r border-b border-black pt-[2px] pl-px">
      <span className="tracking-[0.6px]">Cons. No.:</span>
    </Cell>
    <Cell className="col-[3/6] row-[11/12] border-r border-b border-black pt-px pl-px font-bold">Location:- Pleasant Hill</Cell>
    <Cell className="col-[6/8] row-[11/12] border-b border-black pt-px pl-px font-bold">
      <span className="tracking-[0.26px]">Tarrif Type: residential</span>
    </Cell>
    <Cell className="col-[8/10] row-[11/12] border-r border-b border-black pt-px pl-px font-bold">Discom: UGVCL</Cell>

    <Cell className="col-[2/3] row-[12/13] items-center justify-center border-r border-b border-black font-bold">
      <span className="tracking-[0.6px]">Sr.No.</span>
    </Cell>
    <Cell className="col-[3/7] row-[12/13] items-center justify-center border-r border-b border-black font-bold">
      Description
    </Cell>
    <Cell className="col-[7/8] row-[12/13] items-center justify-center border-r border-b border-black text-center font-bold">
      Proposed
      <br />
      Capacity
      <br />
      (KW)
    </Cell>
    <Cell className="col-[8/9] row-[12/13] items-center justify-center border-r border-b border-black font-bold">Rate/KW</Cell>
    <Cell className="col-[9/10] row-[12/13] items-center justify-center border-r border-b border-black font-bold">
      <span className="tracking-[0.45px]">Value (INR)</span>
    </Cell>

    <Cell className="col-[2/3] row-[13/16] items-center justify-center border-r border-b border-black">1</Cell>
    <Cell className="col-[3/7] row-[13/16] border-r border-b border-black pt-px pl-px">
      <span className="tracking-[0.4px]">S00055 - 4 Person Desk</span>
    </Cell>
    <Cell className="col-[7/8] row-[13/16] items-center justify-center border-r border-b border-black">1.00</Cell>
    <Cell className="col-[8/9] row-[13/16] items-center justify-center border-r border-b border-black">₹ 2,350</Cell>
    <Cell className="col-[9/10] row-[13/16] items-center justify-end border-r border-b border-black pr-px">₹ 2,350.0</Cell>

    <Cell className="col-[2/5] row-[16/18] items-center justify-end border-r border-b border-r-[#c0c0c0] border-b-black pr-px font-bold">
      Subsidy Rate/kW: -
    </Cell>
    <Cell className="col-[5/7] row-[16/18] items-center border-r border-b border-black pl-px font-bold">
      <span className="tracking-[-0.1px]">49093/kW</span>
    </Cell>
    <Cell className="col-[7/9] row-[16/17] justify-end border-r border-b border-black pr-px pt-px font-bold">
      Subsidy (20%, 3.01KW to
    </Cell>
    <Cell className="col-[9/10] row-[16/17] justify-end border-r border-b border-black pt-px pr-px">₹ 0</Cell>
    <Cell className="col-[7/9] row-[17/18] justify-end border-r border-b border-black pr-px pt-px font-bold">
      Subsidy (40%, Upto 3.00KW)
    </Cell>
    <Cell className="col-[9/10] row-[17/18] justify-end border-r border-b border-black pt-px pr-px">₹ 19,637</Cell>
    <Cell className="col-[2/9] row-[18/19] justify-end border-r border-b border-black pt-px pr-px font-bold">
      Net - Meter Charges
    </Cell>
    <Cell className="col-[9/10] row-[18/19] justify-end border-r border-b border-black pt-px pr-px">₹ 5,831</Cell>
    <Cell className="col-[2/9] row-[19/20] justify-end border-r border-b border-black pt-px pr-px font-bold">
      Extra Cable Charges, Structure Charges and Mono perc panel charges
    </Cell>
    <Cell className="col-[9/10] row-[19/20] justify-end border-r border-b border-black pt-px pr-px">
      <span className="tracking-normal">#REF!</span>
    </Cell>
    <Cell className="col-[2/9] row-[20/21] justify-end border-r border-black pt-[2px] pr-[10px] font-bold">
      <span className="font-['DejaVu_Sans',sans-serif] text-[16.700px] tracking-normal">Solar Plant Cost :</span>
    </Cell>
    <Cell className="col-[9/10] row-[20/21] justify-end border-r border-black pt-[2px] pr-px font-bold">
      <span className="tracking-[0.6px]">#REF!</span>
    </Cell>
  </div>
);

const MENU: [string, string][] = [
  ["File", "w-[40px]"], ["Edit", "w-[43px]"], ["View", "w-[49px]"], ["Insert", "w-[55px]"],
  ["Format", "w-[66px]"], ["Styles", "w-[56px]"], ["Sheet", "w-[54px]"], ["Data", "w-[48px]"],
  ["Tools", "w-[52px]"], ["Window", "w-[70px]"], ["Help", "w-[50px]"],
];

const Combo = ({ children, className = "" }: P) => (
  <div className={`flex h-[34px] shrink-0 items-center border border-[#b9b9b9] bg-white ${className}`}>
    <span className="flex-1">{children}</span>
    <div className="flex h-full w-[33px] items-center justify-center border-l border-[#c4c4c4]">
      <BigCaret />
    </div>
  </div>
);

const Nav = ({ d }: { d: string }) => (
  <Svg w={12} h={16}>
    <path d={d} fill="#b4b4b4" />
  </Svg>
);

const StatusLine = () => <span className="h-[13px] w-px shrink-0 bg-[#d6d6d6]" />;

export default function App() {
  return (
    <div className="relative flex h-[768px] w-[1366px] flex-col overflow-hidden bg-[#f7f7f7] font-['Noto_Sans',sans-serif] text-[#3d3d3d]">
      <header className="flex h-[27px] shrink-0 items-center bg-[#1d1d1d] text-[14px] leading-[18px] text-[#f2f2f2]">
        <span className="w-[99px] pl-3 tracking-[0.4px]">Activities</span>
        <div className="flex w-[577px] items-center">
          <Svg w={12} h={14} className="mr-[8px] ml-[12px]">
            <path d="M1 0h8l3 3v11H0V0z" fill="#e8e8e8" />
            <path d="M2.500 4.500h7v7h-7zM2.500 7h7M2.500 9.500h7M5 4.500v7M7.500 4.500v7" stroke="#333" />
          </Svg>
          <span className="w-[112px] tracking-[0.3px] whitespace-nowrap">LibreOffice Calc</span>
          <BigCaret fill="#f2f2f2" />
        </div>
        <span className="w-[51px] text-[13.500px]">Oct 10</span>
        <span className="w-[424px] text-[13.500px]">18:17</span>
        <Svg w={16} h={16}>
          <rect width="16" height="16" rx="4.500" fill="#68a912" />
          <path d="M4.500 8l2.500 2.500 4.500-4.500" stroke="#fff" strokeWidth="2" />
        </Svg>
        <span className="ml-6 w-[26px]">
          en<span className="text-[9px]">1</span>
        </span>
        <BigCaret fill="#f2f2f2" />
        <Svg w={16} h={14} className="ml-[31px]">
          <path d="M5.500 0h5v4h-5zM0 10h4.500v4H0zM5.800 10h4.500v4H5.800zM11.500 10H16v4h-4.500z" fill="#f2f2f2" />
          <path d="M8 4v6M2.300 10V7h11.500v3" stroke="#f2f2f2" />
        </Svg>
        <Svg w={16} h={16} className="ml-[13px]">
          <path d="M1 5.500h3L8 2v12l-4-3.500H1z" fill="#7a7a7a" />
          <path d="M10 5.500q2 2.500 0 5M12 3.500q3.500 4.500 0 9M15 2L1.500 15" stroke="#7a7a7a" strokeWidth="1.200" />
        </Svg>
        <Svg w={14} h={14} className="ml-3">
          <path d="M7 .5v6M4 2.300a5.800 5.800 0 1 0 6 0" stroke="#e6e6e6" strokeWidth="1.400" />
        </Svg>
        <div className="ml-3">
          <BigCaret fill="#f2f2f2" />
        </div>
      </header>

      <div className="flex min-h-0 flex-1">
        <Dock />
        <main className="flex w-[1294px] flex-col">
          <div className="flex h-[37px] shrink-0 items-center border-b border-[#1f1d1d] bg-[#322f30] pl-[486px] text-[14px] font-bold text-[#f5f5f5]">
            <span className="w-[718px] pt-px tracking-[0.29px] whitespace-nowrap">Generated_Report (57).xlsx - LibreOffice Calc</span>
            <Svg w={34} h={12}>
              <path d="M0 8.500h8" stroke="#fff" />
            </Svg>
            <Svg w={9} h={9} className="-mx-px">
              <path d="M1 3h5v5H1z" stroke="#fff" strokeWidth="1.300" />
              <path d="M3.500 1h4.500v4.500" stroke="#bbb" strokeWidth=".8" />
            </Svg>
            <Svg w={18} h={18} className="ml-[22px]">
              <circle cx="9" cy="9" r="9" fill="#e95420" />
              <path d="M5.500 5.500l7 7M12.500 5.500l-7 7" stroke="#fff" strokeWidth="1.400" />
            </Svg>
          </div>

          <div className="flex h-[25px] shrink-0 items-center border-b border-[#dadada] pt-px pl-2 text-[14px] tracking-[0.33px]">
            {MENU.map(([t, w]) => (
              <span key={t} className={w}>
                {t}
              </span>
            ))}
          </div>

          <div className="flex h-[39px] shrink-0 items-center pb-px pl-[3px]">
            <Grip />
            <div className="flex items-center pl-[6px]">
              <Split><NewDoc /></Split>
              <Split><OpenDoc /></Split>
              <Split><SaveDoc /></Split>
              <Sep />
              <Btn><Pdf /></Btn>
              <Btn><Printer /></Btn>
              <Btn><Preview /></Btn>
              <Sep />
              <Btn><Cut /></Btn>
              <Btn><Copy /></Btn>
              <Split><Paste /></Split>
              <Sep />
              <Btn><Brush /></Btn>
              <Btn><ClearFmt /></Btn>
              <Sep />
              <Split off><Undo /></Split>
              <Split off><Undo flip /></Split>
              <Sep />
              <Btn><FindRep /></Btn>
              <Btn><Abc /></Btn>
              <Sep />
              <Split><Table /></Split>
              <Split><Table v /></Split>
              <Sep />
              <Btn><Sort /></Btn>
              <Btn><SortAz /></Btn>
              <Btn><SortZa /></Btn>
              <Btn><Filter /></Btn>
              <Sep />
              <Btn><Image /></Btn>
              <Btn><Chart /></Btn>
              <Btn><Pivot /></Btn>
              <Sep />
              <Split><Glyph className="font-[Noto_Sans] text-[26px] font-bold">Ω</Glyph></Split>
              <Btn><Link /></Btn>
              <Btn><Comment /></Btn>
              <Btn><HeadFoot /></Btn>
              <Sep />
              <Btn><PrintArea /></Btn>
              <Split><Freeze /></Split>
              <Btn><SplitWin /></Btn>
              <Sep />
              <Btn><Shapes /></Btn>
            </div>
          </div>

          <div className="flex h-[39px] shrink-0 items-center pb-px pl-[3px]">
            <Grip />
            <Combo className="ml-[6px] w-[144px] rounded pl-[11px] text-[14.500px] italic">Calibri</Combo>
            <Combo className="ml-2 w-[85px] rounded pl-[10px] text-[14px]">11</Combo>
            <Sep />
            <Btn><Glyph className="font-[Noto_Sans] text-[23px] font-bold">B</Glyph></Btn>
            <Btn><Glyph className="font-[Liberation_Serif] text-[25px] font-bold italic">I</Glyph></Btn>
            <Btn>
              <Svg>
                <path d="M6 3v9q0 5.500 6 5.500t6-5.500V3" stroke="#4a4a4a" strokeWidth="2.600" />
                <path d="M2 22.200h20" stroke="#4a4a4a" strokeWidth="1.800" />
              </Svg>
            </Btn>
            <Sep />
            <Split><FontColor /></Split>
            <Split><Highlight /></Split>
            <Sep />
            <Btn><HAlign m={0} /></Btn>
            <Btn><HAlign m={1} /></Btn>
            <Btn><HAlign m={2} /></Btn>
            <Sep />
            <Btn><Wrap /></Btn>
            <Btn><Merge /></Btn>
            <Sep />
            <Btn><VAlign y={5} /></Btn>
            <Btn><VAlign y={9} /></Btn>
            <div className="flex h-[35px] w-[33px] shrink-0 items-center justify-center rounded border border-[#bcbcbc] bg-[#d3d3d3]">
              <VAlign y={13} />
            </div>
            <Sep />
            <Split><Money /></Split>
            <Btn><Glyph className="font-[Noto_Sans] text-[20px] font-extrabold">%</Glyph></Btn>
            <Btn><Glyph className="font-[Noto_Sans] text-[17px] font-extrabold tracking-[-0.5px]">7.4</Glyph></Btn>
            <Btn><DateIc /></Btn>
            <Sep />
            <Btn><Decimals /></Btn>
            <Btn><Decimals del /></Btn>
            <Sep />
            <Btn><Indent /></Btn>
            <Btn><Indent back /></Btn>
            <Sep />
            <Split><Borders /></Split>
            <Split><LineStyle /></Split>
            <Split><BorderColor /></Split>
            <Sep />
            <Split><Cond /></Split>
          </div>

          <div className="flex min-h-0 flex-1">
            <section className="flex w-[1286px] flex-col">
              <div className="flex h-[34px] shrink-0 items-center">
                <Combo className="w-[157px] rounded-r pl-[10px] text-[13.500px]">M61</Combo>
                <div className="mx-1 h-[25px] w-px bg-[#d6d6d6]" />
                <span className="flex w-[23px] items-baseline justify-center text-[#454545]">
                  <b className="text-[18px] leading-6">f</b>
                  <b className="text-[14px]">x</b>
                </span>
                <Svg w={12} h={16} className="mr-[10px] ml-[5px]">
                  <path d="M1 1h10v4H9.500L9 3.500H5.500L8.500 8 5 12.500h4.500l.5-1.500h1.500v4H1v-2l4-5-4-5z" fill="#454545" />
                </Svg>
                <Caret />
                <Svg w={12} h={10} className="mx-[10px]">
                  <path d="M1 2.500h10M1 7.500h10" stroke="#555" strokeWidth="2" />
                </Svg>
                <div className="ml-1 h-6 w-[1001px] border border-[#b0b0b0] bg-white" />
                <div className="ml-1 pb-[2px]">
                  <BigCaret />
                </div>
              </div>
              <div className="flex h-[470px]">
                <Sheet />
                <div className="flex w-3 flex-col items-center bg-[#d0d0d0]">
                  <div className="flex h-[6px] w-full items-center justify-center bg-[#aeaeae]">
                    <span className="h-px w-[6px] bg-black" />
                  </div>
                  <div className="mt-[5px] h-[49px] w-[6px] rounded-full bg-[#858585]" />
                </div>
              </div>
              <div className="flex h-3 w-[1274px] shrink-0 items-center justify-between bg-[#d0d0d0] pl-1">
                <div className="h-[6px] w-[582px] rounded-full bg-[#858585]" />
                <div className="flex h-full w-[5px] items-center justify-center bg-[#aeaeae]">
                  <span className="h-[6px] w-px bg-black" />
                </div>
              </div>
              <div className="flex flex-1 items-center text-[12px]">
                <div className="flex w-[114px] items-center gap-[12.500px] pl-[13px]">
                  <Nav d="M1 0h1.200v16H1zM10.500 0v16L2.500 8z" />
                  <Nav d="M9.500 0v16L1 8z" />
                  <Nav d="M2.500 0v16L11 8z" />
                  <Nav d="M1 0v16L9 8zM9.700 0h1.200v16H9.700z" />
                </div>
                <Svg w={18} h={18} className="ml-[1px]">
                  <path d="M9.500 .5v17M1 9h17" stroke="#3d3d3d" strokeWidth="3" />
                </Svg>
                <div className="ml-[10px] flex h-[25px] w-[89px] items-center border-2 border-[#fb0d0d] bg-white pb-[2px] pl-[11px]">
                  Residential
                </div>
                <span className="pb-[2px] pl-[13px] tracking-[-0.15px]">Calculation</span>
              </div>
            </section>
            <aside className="mb-[1px] flex w-2 flex-col justify-center border-y border-l border-[#a9a9a9] pt-[2px]">
              <div className="-ml-px flex h-[73px] items-center justify-center bg-[#999]">
                <svg width="5" height="8" viewBox="0 0 5 8">
                  <path d="M5 0v8L0 4z" fill="#fff" />
                </svg>
              </div>
            </aside>
          </div>

          <div className="flex h-10 shrink-0 items-center pb-px pl-[3px] text-[14px]">
            <Grip />
            <Svg w={22} h={22} className="ml-3">
              <circle cx="11" cy="11" r="10.500" fill="#d9343c" stroke="#b0252d" />
              <path d="M7 7l8 8M15 7l-8 8" stroke="#fff" strokeWidth="2.600" />
            </Svg>
            <Combo className="ml-[5px] w-[250px] rounded pl-[10px]">
              <span className="tracking-[0.2px] text-[#8b8b8b]">Find</span>
            </Combo>
            <Svg w={18} h={16} className="ml-2">
              <path d="M9 0l8 7-2 2-4-3v10H7V6L3 9 1 7z" fill="#b4b4b4" />
            </Svg>
            <Svg w={18} h={16} className="mr-[10px] ml-[15px] rotate-180">
              <path d="M9 0l8 7-2 2-4-3v10H7V6L3 9 1 7z" fill="#b4b4b4" />
            </Svg>
            <span className="w-[51px] text-[12px] text-[#8b8b8b]">Find All</span>
            <span className="mr-[7px] h-4 w-4 rounded-[3px] border border-[#b0b0b0] bg-white" />
            <span className="w-[132px] tracking-[0.35px] whitespace-nowrap">Formatted Display</span>
            <span className="mr-[7px] h-4 w-4 rounded-[3px] border border-[#b0b0b0] bg-white" />
            <span className="w-[81px] tracking-[0.25px] whitespace-nowrap">Match Case</span>
            <Sep />
            <Btn><FindRep /></Btn>
            <Sep />
          </div>

          <footer className="flex h-[21px] shrink-0 items-center border-t border-[#a9a9a9] text-[12px] whitespace-nowrap">
            <span className="w-[167px] pl-[10px]">Sheet 1 of 2</span>
            <StatusLine />
            <span className="w-[165px]" />
            <StatusLine />
            <span className="w-[228px] pl-2">PageStyle_Residential</span>
            <StatusLine />
            <span className="w-[183px] pl-[2px] text-center tracking-[-0.25px]">English (India)</span>
            <StatusLine />
            <span className="w-[67px]" />
            <StatusLine />
            <Svg w={16} h={12} className="ml-[7px]">
              <path d="M.5 1.500h5M.5 10.500h5M3 1.500v9M9 8v2.500h6V8" stroke="#777" />
            </Svg>
            <span className="w-[5px]" />
            <StatusLine />
            <Svg w={13} h={11} className="mx-2 -mt-[2px]">
              <rect x=".5" y=".5" width="12" height="10" fill="#ececec" stroke="#999" />
              <path d="M5 2h3v3.500h2L6.500 9 3 5.500h2z" fill="#777" stroke="#555" strokeWidth=".6" />
            </Svg>
            <StatusLine />
            <span className="w-7" />
            <StatusLine />
            <span className="w-[200px] text-center tracking-[-0.25px]">Average: ; Sum: 0</span>
            <StatusLine />
            <Svg w={130} h={14} className="ml-[7px]">
              <path d="M2 7.500h9M119 7.500h9M123.500 3v9M17 7h97" stroke="#8a8a8a" />
              <circle cx="65" cy="7" r="4.500" fill="#f2f2f2" stroke="#8a8a8a" />
            </Svg>
            <span className="w-[5px]" />
            <StatusLine />
            <span className="pl-[6px]">111%</span>
          </footer>
        </main>
      </div>

      {/* highlight boxes laid over the sheet */}
      <div className="absolute top-[371px] left-[486px] h-[23px] w-[400px] border-2 border-[#fb0d0d]" />
      <div className="absolute top-[392px] left-[173px] h-[46px] w-[470px] border-2 border-[#fb0d0d]" />
      <div className="absolute top-[413px] left-[642px] h-[25px] w-[244px] border-2 border-[#fb0d0d]" />
      <div className="absolute top-[436px] left-[111px] h-[141px] w-[775px] border-2 border-[#fb0d0d]" />
    </div>
  );
}
